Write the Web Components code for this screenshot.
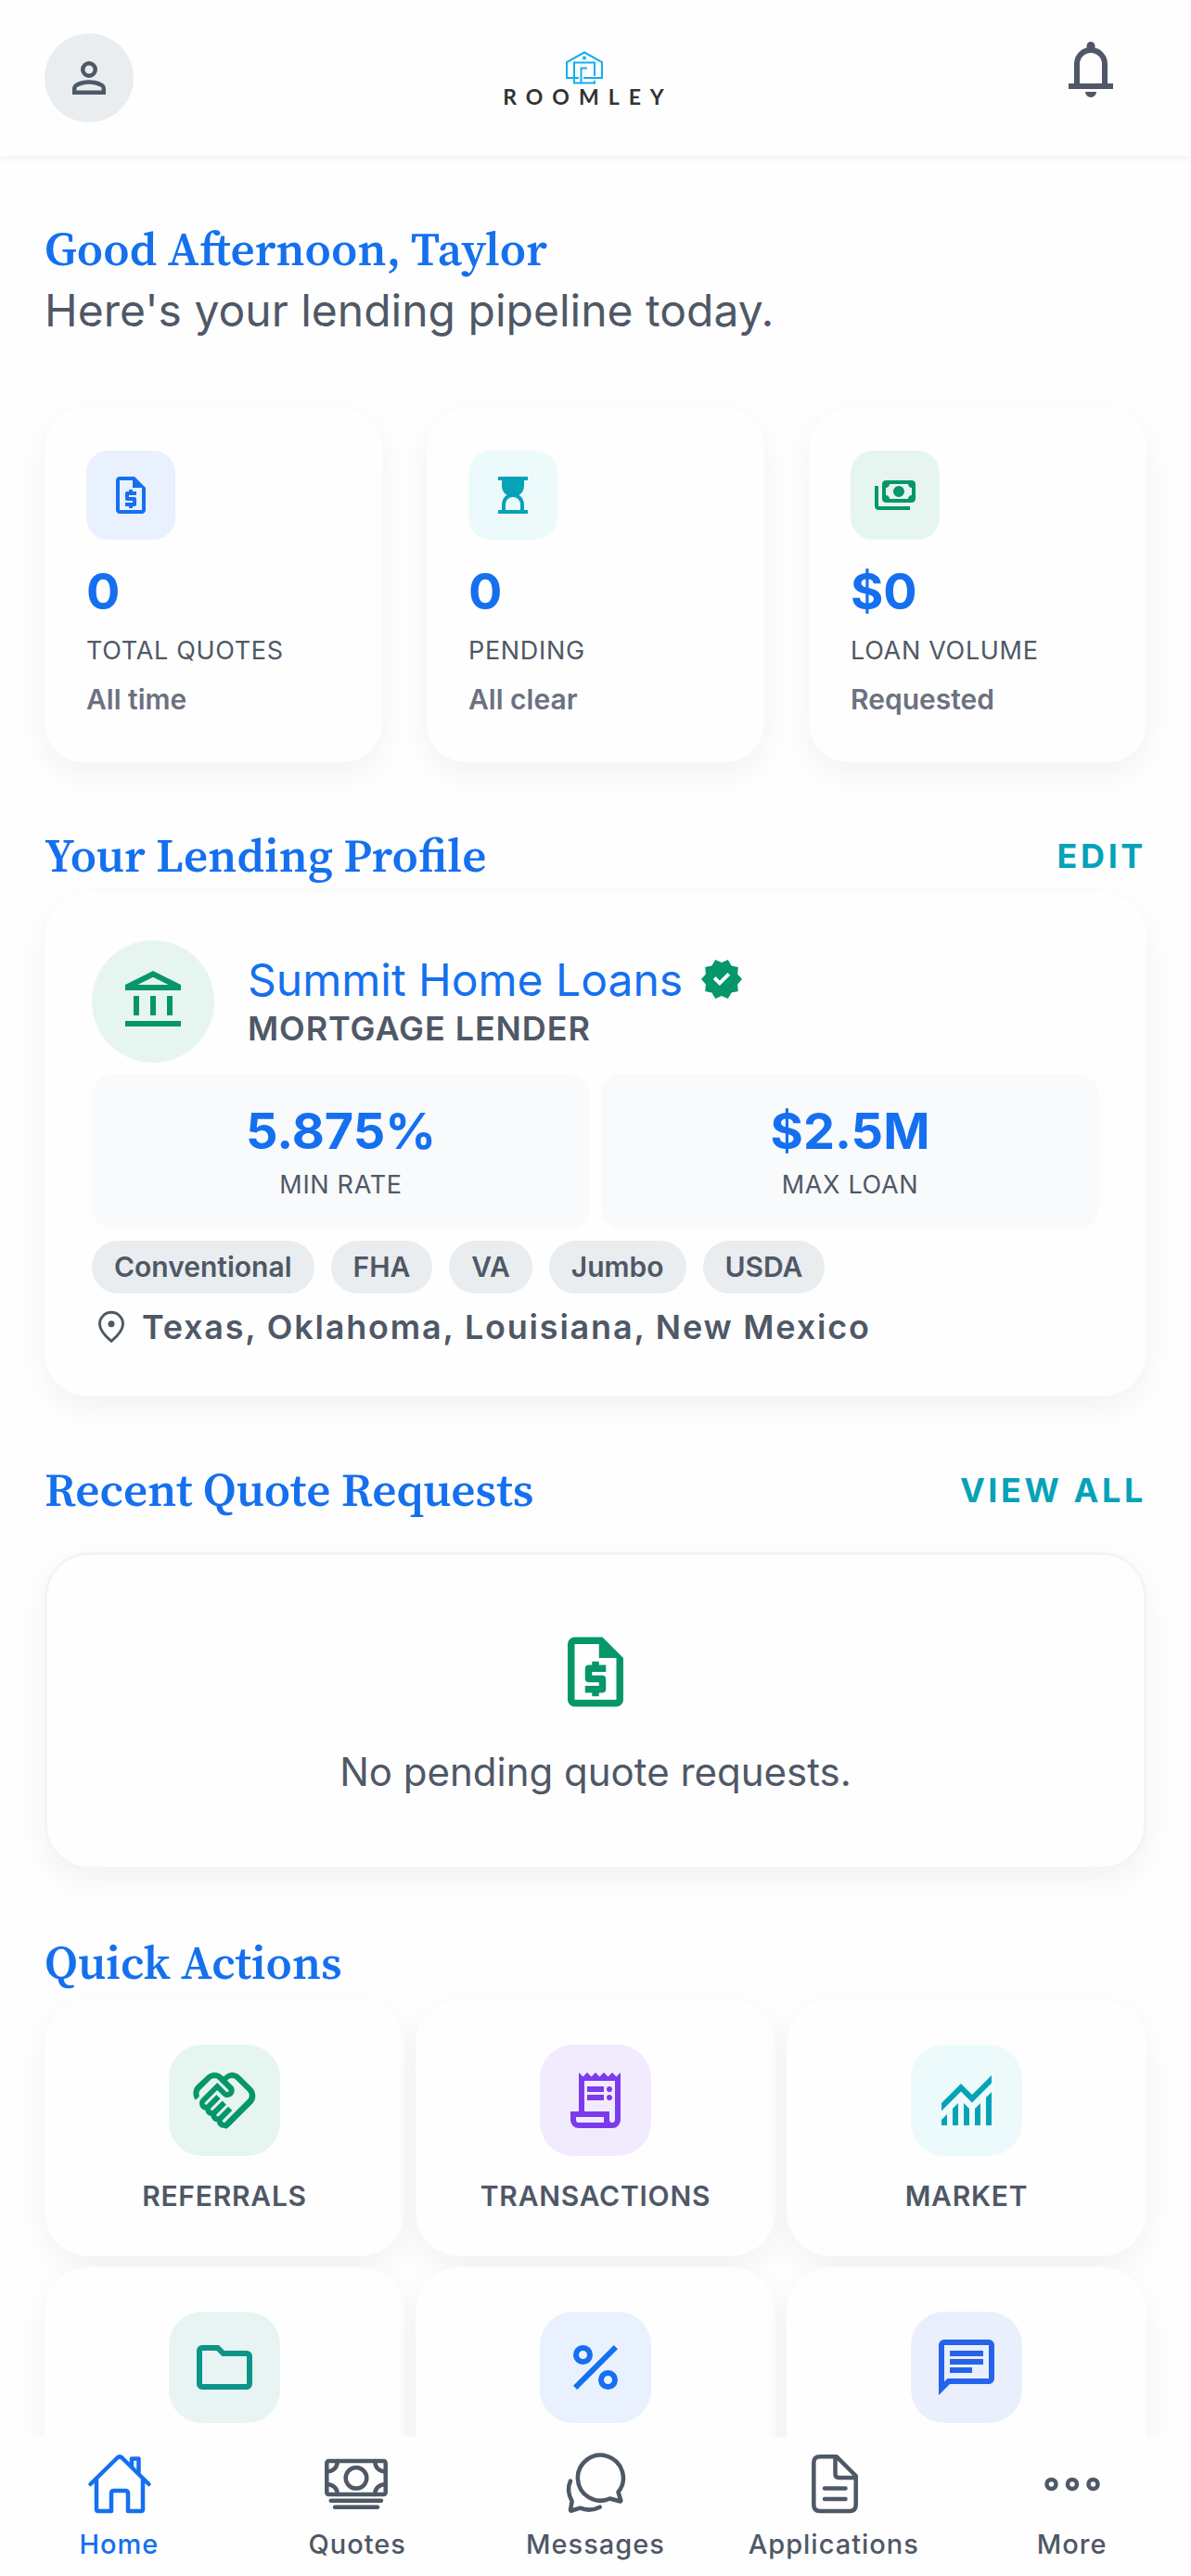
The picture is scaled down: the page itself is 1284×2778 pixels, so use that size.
<!DOCTYPE html>
<html lang="en">
<head>
<meta charset="utf-8">
<meta name="viewport" content="width=device-width, initial-scale=1">
<title>Roomley</title>
<style>
    :root{
        --blue: #1570ef;
        --cyan: #06a2b8;
        --green: #059669;
        --teal: #0d9488;
        --violet: #7c3aed;
        --indigo: #2563eb;
        --ink: #4f5866;
        --muted: #6b7280;
        --chip: #e9edf0;
        --surface: #fefefe;
        --shadow: 0 12px 36px rgba(15,23,42,.05);
        --serif: "Source Serif 4", "Source Serif Pro", "Liberation Serif", serif;
    }
    html,body{height: 100%;}
    body{margin: 0;background: var(--surface);color: var(--ink);font-family: Inter, "Liberation Sans", sans-serif;font-size: 30px;}
</style>
</head>
<body>

<roomley-app>
    <roomley-header slot="header"></roomley-header>

    <roomley-greeting>
        <span slot="title">Good Afternoon, Taylor</span>
        Here's your lending pipeline today.
    </roomley-greeting>

    <stat-row>
        <stat-card icon="quote" tone="blue" value="0" label="TOTAL QUOTES">All time</stat-card>
        <stat-card icon="hourglass" tone="cyan" value="0" label="PENDING">All clear</stat-card>
        <stat-card icon="payments" tone="green" value="$0" label="LOAN VOLUME">Requested</stat-card>
    </stat-row>

    <page-section heading="Your Lending Profile" action="EDIT">
        <lender-card name="Summit Home Loans" role-name="MORTGAGE LENDER">
            <rate-box slot="rates" value="5.875%">MIN RATE</rate-box>
            <rate-box slot="rates" value="$2.5M">MAX LOAN</rate-box>
            <loan-chip slot="chips">Conventional</loan-chip>
            <loan-chip slot="chips">FHA</loan-chip>
            <loan-chip slot="chips">VA</loan-chip>
            <loan-chip slot="chips">Jumbo</loan-chip>
            <loan-chip slot="chips">USDA</loan-chip>
            <span slot="states">Texas, Oklahoma, Louisiana, New Mexico</span>
        </lender-card>
    </page-section>

    <page-section heading="Recent Quote Requests" action="VIEW ALL" spaced>
        <empty-card icon="quote">No pending quote requests.</empty-card>
    </page-section>

    <page-section heading="Quick Actions">
        <action-grid>
            <quick-action icon="handshake" tone="green">REFERRALS</quick-action>
            <quick-action icon="receipt" tone="violet">TRANSACTIONS</quick-action>
            <quick-action icon="market" tone="cyan">MARKET</quick-action>
            <quick-action icon="folder" tone="teal"></quick-action>
            <quick-action icon="percent" tone="blue"></quick-action>
            <quick-action icon="chat" tone="indigo"></quick-action>
        </action-grid>
    </page-section>

    <tab-bar slot="tabs">
        <tab-item icon="home" active>Home</tab-item>
        <tab-item icon="cash">Quotes</tab-item>
        <tab-item icon="bubbles">Messages</tab-item>
        <tab-item icon="file">Applications</tab-item>
        <tab-item icon="more">More</tab-item>
    </tab-bar>
</roomley-app>

<script>
// filled icons, 24 unit grid
const ICONS = {
    person: 'M12 12q-1.65 0-2.825-1.175T8 8t1.175-2.825T12 4t2.825 1.175T16 8t-1.175 2.825T12 12m-8 8v-2.8q0-.85.438-1.562T5.6 14.55q1.55-.775 3.15-1.162T12 13t3.25.388t3.15 1.162q.725.375 1.163 1.088T20 17.2V20zm2-2h12v-.8q0-.275-.137-.5t-.363-.35q-1.35-.675-2.725-1.012T12 15t-2.775.338T6.5 16.35q-.225.125-.363.35T6 17.2zm6-8q.825 0 1.413-.587T14 8t-.587-1.412T12 6t-1.412.588T10 8t.588 1.413T12 10',
    bell: 'M4 19v-2h2v-7q0-2.075 1.25-3.687T10.5 4.2v-.7q0-.625.438-1.062T12 2t1.063.438T13.5 3.5v.7q2 .5 3.25 2.113T18 10v7h2v2zm8 3q-.825 0-1.412-.587T10 20h4q0 .825-.587 1.413T12 22m-4-5h8v-7q0-1.65-1.175-2.825T12 6T9.175 7.175T8 10z',
    quote: 'M11 19h2v-1h1q.425 0 .713-.288T15 17v-3q0-.425-.288-.712T14 13h-3v-1h4v-2h-2V9h-2v1h-1q-.425 0-.712.288T9 11v3q0 .425.288.713T10 15h3v1H9v2h2zm-5 3q-.825 0-1.412-.587T4 20V4q0-.825.588-1.412T6 2h8l6 6v12q0 .825-.587 1.413T18 22zm7-14V4H6v16h12V8z',
    hourglass: 'M8 20h8v-3q0-1.65-1.175-2.825T12 13t-2.825 1.175T8 17zm-4 2v-2h2v-3q0-1.525.713-2.863T8.7 12q-1.275-.8-1.987-2.137T6 7V4H4V2h16v2h-2v3q0 1.525-.712 2.863T15.3 12q1.275.8 1.988 2.138T18 17v3h2v2z',
    payments: 'M14 13q-1.25 0-2.125-.875T11 10t.875-2.125T14 7t2.125.875T17 10t-.875 2.125T14 13m-7 3q-.825 0-1.412-.587T5 14V6q0-.825.588-1.412T7 4h14q.825 0 1.413.588T23 6v8q0 .825-.587 1.413T21 16zm2-2h10q0-.825.588-1.412T21 12V8q-.825 0-1.412-.587T19 6H9q0 .825-.587 1.413T7 8v4q.825 0 1.413.588T9 14m11 6H3q-.825 0-1.412-.587T1 18V7h2v11h17z',
    bank: 'M5 17v-7h2v7zm6 0v-7h2v7zm-9 4v-2h20v2zm15-4v-7h2v7zM2 8V6l10-5l10 5v2zm4.475-2h11.05L12 3.25z',
    verified: 'm8.6 22.5l-1.9-3.2l-3.6-.8l.35-3.7L1 12l2.45-2.8l-.35-3.7l3.6-.8l1.9-3.2L12 2.95l3.4-1.45l1.9 3.2l3.6.8l-.35 3.7L23 12l-2.45 2.8l.35 3.7l-3.6.8l-1.9 3.2l-3.4-1.45zm2.35-6.95L16.6 9.9l-1.4-1.45l-4.25 4.25l-2.15-2.15L7.4 12z',
    handshake: 'M11.875 20q.075 0 .15-.037t.125-.088l8.2-8.2q.3-.3.438-.675t.137-.75q0-.4-.137-.763t-.438-.637l-4.25-4.25q-.275-.3-.638-.437T14.7 4.025q-.375 0-.75.138t-.675.437l-.275.275l1.85 1.875q.375.35.55.8t.175.95q0 1.05-.712 1.763T13.1 10.975q-.5 0-.963-.175t-.812-.525L9.4 8.35l-4.375 4.375q-.075.075-.112.163t-.038.187q0 .2.15.363t.35.162q.1 0 .188-.05t.162-.125l3.4-3.4l1.4 1.4l-3.375 3.4q-.075.075-.112.163T7 15.175q0 .2.15.35t.35.15q.1 0 .188-.037t.162-.113l3.4-3.375l1.4 1.4l-3.375 3.4q-.075.05-.112.15t-.038.2q0 .2.15.35t.35.15q.1 0 .187-.037t.163-.113l3.4-3.375l1.4 1.4l-3.4 3.4q-.075.075-.113.163t-.037.187q0 .2.162.35t.363.15m-.025 2q-.925 0-1.637-.612t-.838-1.538q-.85-.125-1.425-.7t-.7-1.425q-.85-.125-1.412-.712T5.15 15.6q-.95-.125-1.55-.825T3 13.125q0-.5.188-.963t.537-.812l5.675-5.65L12.625 8.9q.05.075.15.113t.2.037q.225 0 .375-.137t.15-.363q0-.1-.037-.2t-.113-.15L9.775 4.625q-.275-.3-.638-.437t-.762-.138q-.375 0-.75.138t-.675.437l-3.525 3.55q-.225.225-.375.525t-.2.6t0 .613t.2.587l-1.45 1.45q-.425-.575-.625-1.263T.8 9.3t.25-1.363t.725-1.187L5.5 3.225q.6-.6 1.363-.9T8.45 2.025t1.588.3t1.362.9l.275.275l.275-.275q.6-.6 1.363-.9T14.7 2t1.588.325t1.362.9L21.875 7.45q.6.6.913 1.375t.312 1.6t-.312 1.575t-.913 1.35l-8.2 8.175q-.35.35-.825.538T11.85 22',
    receipt: 'M6 22q-1.25 0-2.125-.875T3 19v-3h3V2l1.5 1.5L9 2l1.5 1.5L12 2l1.5 1.5L15 2l1.5 1.5L18 2l1.5 1.5L21 2v17q0 1.25-.875 2.125T18 22zm12-2q.425 0 .713-.288T19 19V5H8v11h9v3q0 .425.288.713T18 20M9 9V7h6v2zm0 3v-2h6v2zm8-3q-.425 0-.712-.288T16 8t.288-.712T17 7t.713.288T18 8t-.288.713T17 9m0 3q-.425 0-.712-.288T16 11t.288-.712T17 10t.713.288T18 11t-.288.713T17 12M6 20h9v-2H5v1q0 .425.288.713T6 20',
    market: 'M3 21v-2l2-2v4zm4 0v-6l2-2v8zm4 0v-8l2 2.025V21zm4 0v-5.975l2-2V21zm4 0V11l2-2v12zM3 15.825V13l7-7l4 4l7-7v2.825l-7 7l-4-4z',
    folder: 'M4 20q-.825 0-1.412-.587T2 18V6q0-.825.588-1.412T4 4h6l2 2h8q.825 0 1.413.588T22 8v10q0 .825-.587 1.413T20 20zm0-2h16V8h-8.825l-2-2H4z',
    percent: 'M7.5 11q-1.45 0-2.475-1.025T4 7.5t1.025-2.475T7.5 4t2.475 1.025T11 7.5T9.975 9.975T7.5 11m0-2q.625 0 1.063-.437T9 7.5t-.437-1.062T7.5 6t-1.062.438T6 7.5t.438 1.063T7.5 9m9 11q-1.45 0-2.475-1.025T13 16.5t1.025-2.475T16.5 13t2.475 1.025T20 16.5t-1.025 2.475T16.5 20m0-2q.625 0 1.063-.437T18 16.5t-.437-1.062T16.5 15t-1.062.438T15 16.5t.438 1.063T16.5 18M5.4 20L4 18.6L18.6 4L20 5.4z',
    chat: 'M6 14h8v-2H6zm0-3h12V9H6zm0-3h12V6H6zM2 22V4q0-.825.588-1.412T4 2h16q.825 0 1.413.588T22 4v12q0 .825-.587 1.413T20 18H6zm3.15-6H20V4H4v13.125z'
};

// outlined icons, 72 unit grid
const LINES = {
    pin: '<g stroke-width="5"><path d="M36 62.500C46 54 57.500 43 57.500 30.500A21.500 21.500 0 0 0 14.500 30.500C14.500 43 26 54 36 62.500Z"/><circle cx="36" cy="30.500" r="6" fill="currentColor" stroke="none"/></g>',
    home: '<path d="M5.500 36 34.500 7.500Q37 5.200 39.500 7.500L68.500 36M12 30.500V63Q12 65 14 65H28V46Q28 43 31 43H43Q46 43 46 46V65H60Q62 65 62 63V30.500M50 17V8.500H57.500V24"/>',
    cash: '<rect x="3.300" y="11" width="63.400" height="36" rx="2"/><circle cx="35" cy="29.300" r="11.300"/><path d="M3.300 22.500Q14.500 21.500 14.800 11M66.700 22.500Q55.500 21.500 55.200 11M3.300 36Q14.500 37 14.800 47M66.700 36Q55.500 37 55.200 47M7.700 53.700H62M12 60.700H58"/>',
    bubbles: '<path d="M60.500 44.500A24.500 24.500 0 1 0 51.500 51.500L62.500 54.500Q63.500 54.700 63.300 53.500Z"/><path d="M9 32.500C5.500 40 6.500 47 10.700 54.500L9 63.500Q8.800 65 10.300 64.500L19.500 61.700Q30 66 40.700 60.700"/>',
    file: '<path d="M39 6.300H21Q14.300 6.300 14.300 13V58.300Q14.300 65 21 65H53Q59.700 65 59.700 58.300V27ZM37.500 7V25Q37.500 29 41.500 29H59M26 40.500H48.500M26 52H48.500"/>',
    more: '<circle cx="13.500" cy="36" r="5"/><circle cx="36" cy="36" r="5"/><circle cx="58.500" cy="36" r="5"/>'
};

class AppIcon extends HTMLElement {
    constructor() {
        super();
        this.attachShadow({ mode: 'open' });
    }
    connectedCallback() {
        const name = this.getAttribute('name');
        const svg = ICONS[name]
            ? `<svg viewBox="0 0 24 24" fill="currentColor" aria-hidden="true"><path d="${ICONS[name]}"/></svg>`
            : `<svg viewBox="0 0 72 72" fill="none" stroke="currentColor" stroke-width="4.500" stroke-linecap="round" stroke-linejoin="round" aria-hidden="true">${LINES[name]}</svg>`;
        this.shadowRoot.innerHTML = `
            <style>
                :host{display: block;flex: none;width: 72px;height: 72px;}
                svg{display: block;width: 100%;height: 100%;}
            </style>
            ${svg}
        `;
    }
}
customElements.define('app-icon', AppIcon);

// base class: every element below only gives its markup
class BaseElement extends HTMLElement {
    constructor() {
        super();
        this.attachShadow({ mode: 'open' });
    }
    attr(name) {
        return this.getAttribute(name) || '';
    }
    connectedCallback() {
        this.shadowRoot.innerHTML = this.render();
    }
}

class RoomleyApp extends BaseElement {
    render() {
        return `
            <style>
                :host{display: flex;flex-direction: column;height: 100vh;}
                main{flex: 1;min-height: 0;overflow-y: auto;scrollbar-width: none;padding: 72px 48px 48px;}
            </style>
            <slot name="header"></slot>
            <main><slot></slot></main>
            <slot name="tabs"></slot>
        `;
    }
}
customElements.define('roomley-app', RoomleyApp);

class RoomleyHeader extends BaseElement {
    render() {
        return `
            <style>
                :host{display: block;position: relative;z-index: 1;background: var(--surface);box-shadow: 0 3px 9px rgba(15,23,42,.05);}
                header{display: flex;align-items: center;justify-content: space-between;padding: 36px 48px;}
                button{display: flex;align-items: center;justify-content: center;height: 96px;padding: 0;border: 0;background: none;color: inherit;}
                .avatar{width: 96px;border-radius: 50%;background: var(--chip);}
                .avatar app-icon{width: 54px;height: 54px;}
                .bell{width: 120px;padding-bottom: 18px;}
                .logo{display: flex;flex-direction: column;align-items: center;color: #333;text-decoration: none;}
                .logo svg{display: block;width: 42px;height: 40px;}
                .logo span{padding-left: 8px;font: 700 23px/22px Lato, sans-serif;letter-spacing: 10px;}
            </style>
            <header>
                <button class="avatar" aria-label="Account"><app-icon name="person"></app-icon></button>
                <a class="logo" href="#">
                    <svg viewBox="0 -2 42 40" fill="none" stroke="#12aef0" stroke-width="2" aria-hidden="true">
                        <path d="M15 29H2V12L21 1.500 40 12V29H20M32 27V12.500H10V34.500H32V32M17.500 34.500V18.500H24"/>
                        <path d="M19.200 7.500h3.500" stroke-width="3.500"/>
                    </svg>
                    <span>ROOMLEY</span>
                </a>
                <button class="bell" aria-label="Notifications"><app-icon name="bell"></app-icon></button>
            </header>
        `;
    }
}
customElements.define('roomley-header', RoomleyHeader);

class RoomleyGreeting extends BaseElement {
    render() {
        return `
            <style>
                :host{display: block;}
                h1{margin: 0;font: 600 51px/57px var(--serif);color: var(--blue);}
                p{margin: 0;font-size: 48px;line-height: 75px;}
            </style>
            <h1><slot name="title"></slot></h1>
            <p><slot></slot></p>
        `;
    }
}
customElements.define('roomley-greeting', RoomleyGreeting);

class StatRow extends BaseElement {
    render() {
        return `
            <style>
                :host{display: grid;grid-template-columns: repeat(3, 1fr);gap: 48px;margin-top: 69px;}
            </style>
            <slot></slot>
        `;
    }
}
customElements.define('stat-row', StatRow);

class IconTile extends BaseElement {
    render() {
        return `
            <style>
                :host{display: flex;flex: none;align-items: center;justify-content: center;width: 96px;height: 96px;border-radius: 24px;color: var(--${this.attr('tone')});background: color-mix(in srgb, currentColor 10%, white);}
                :host([tone="cyan"]){background: #edfafc;}
                :host([size="large"]){width: 120px;height: 120px;border-radius: 36px;}
                :host([size="round"]){width: 132px;height: 132px;border-radius: 50%;}
                app-icon{width: 48px;height: 48px;}
                :host([size]) app-icon{width: 72px;height: 72px;}
            </style>
            <app-icon name="${this.attr('icon')}"></app-icon>
        `;
    }
}
customElements.define('icon-tile', IconTile);

class StatCard extends BaseElement {
    render() {
        return `
            <style>
                :host{display: block;padding: 45px;border-radius: 42px;background: var(--surface);box-shadow: var(--shadow);}
                p{margin: 0;}
                .value{margin-top: 24px;font-size: 54px;line-height: 63px;font-weight: 700;color: var(--blue);}
                .label{margin-top: 15px;font-size: 27px;line-height: 36px;letter-spacing: .025em;white-space: nowrap;}
                .note{margin-top: 12px;font-size: 30px;line-height: 45px;font-weight: 600;color: var(--muted);}
            </style>
            <icon-tile icon="${this.attr('icon')}" tone="${this.attr('tone')}"></icon-tile>
            <p class="value">${this.attr('value')}</p>
            <p class="label">${this.attr('label')}</p>
            <p class="note"><slot></slot></p>
        `;
    }
}
customElements.define('stat-card', StatCard);

class PageSection extends BaseElement {
    render() {
        const action = this.attr('action');
        return `
            <style>
                :host{display: block;margin-top: 72px;}
                .head{display: flex;align-items: center;justify-content: space-between;margin-bottom: 12px;}
                :host([spaced]) .head{margin-bottom: 39px;}
                h2{margin: 0;font: 600 51px/57px var(--serif);color: var(--blue);}
                a{font-size: 36px;line-height: 48px;font-weight: 700;letter-spacing: .1em;color: var(--cyan);text-decoration: none;}
            </style>
            <div class="head">
                <h2>${this.attr('heading')}</h2>
                ${action ? `<a href="#">${action}</a>` : ''}
            </div>
            <slot></slot>
        `;
    }
}
customElements.define('page-section', PageSection);

class LenderCard extends BaseElement {
    render() {
        return `
            <style>
                :host{display: flex;flex-direction: column;gap: 12px;padding: 51px;border-radius: 48px;background: var(--surface);box-shadow: var(--shadow);}
                .top{display: flex;align-items: center;gap: 36px;}
                h3{display: flex;align-items: center;gap: 18px;margin: 0;font-size: 48px;line-height: 57px;font-weight: 400;color: var(--blue);}
                h3 app-icon{width: 48px;height: 48px;color: var(--green);}
                p{margin: 0;font-size: 36px;line-height: 48px;font-weight: 600;letter-spacing: .025em;}
                .rates{display: grid;grid-template-columns: 1fr 1fr;gap: 12px;}
                .chips{display: flex;flex-wrap: wrap;gap: 18px;}
                .states{display: flex;align-items: center;gap: 12px;letter-spacing: .05em;}
                .states app-icon{width: 42px;height: 42px;}
            </style>
            <div class="top">
                <icon-tile icon="bank" tone="green" size="round"></icon-tile>
                <div>
                    <h3>${this.attr('name')}<app-icon name="verified"></app-icon></h3>
                    <p>${this.attr('role-name')}</p>
                </div>
            </div>
            <div class="rates"><slot name="rates"></slot></div>
            <div class="chips"><slot name="chips"></slot></div>
            <p class="states"><app-icon name="pin"></app-icon><slot name="states"></slot></p>
        `;
    }
}
customElements.define('lender-card', LenderCard);

class RateBox extends BaseElement {
    render() {
        return `
            <style>
                :host{display: block;padding: 27px 24px 24px;border-radius: 24px;background: #f8fafc;text-align: center;}
                p{margin: 0;}
                .value{font-size: 54px;line-height: 69px;font-weight: 700;color: var(--blue);}
                .label{font-size: 27px;line-height: 48px;letter-spacing: .025em;}
            </style>
            <p class="value">${this.attr('value')}</p>
            <p class="label"><slot></slot></p>
        `;
    }
}
customElements.define('rate-box', RateBox);

class LoanChip extends BaseElement {
    render() {
        return `
            <style>
                :host{display: block;padding: 0 24px;border-radius: 30px;background: var(--chip);font-size: 30px;line-height: 57px;font-weight: 600;}
            </style>
            <slot></slot>
        `;
    }
}
customElements.define('loan-chip', LoanChip);

class EmptyCard extends BaseElement {
    render() {
        return `
            <style>
                :host{display: flex;flex-direction: column;align-items: center;gap: 36px;padding: 81px 48px 75px;border: 3px solid #f1f5f9;border-radius: 48px;background: var(--surface);box-shadow: var(--shadow);}
                app-icon{width: 90px;height: 90px;color: var(--green);}
                p{margin: 0;font-size: 42px;line-height: 54px;}
            </style>
            <app-icon name="${this.attr('icon')}"></app-icon>
            <p><slot></slot></p>
        `;
    }
}
customElements.define('empty-card', EmptyCard);

class ActionGrid extends BaseElement {
    render() {
        return `
            <style>
                :host{display: grid;grid-template-columns: repeat(3, 1fr);gap: 12px;}
            </style>
            <slot></slot>
        `;
    }
}
customElements.define('action-grid', ActionGrid);

class QuickAction extends BaseElement {
    render() {
        return `
            <style>
                :host{display: block;}
                button{display: flex;flex-direction: column;align-items: center;gap: 24px;width: 100%;padding: 48px 24px 45px;border: 0;border-radius: 48px;background: var(--surface);box-shadow: var(--shadow);color: inherit;font: 600 30px/39px Inter, sans-serif;letter-spacing: .025em;}
                span{min-height: 39px;}
            </style>
            <button aria-label="${this.textContent || this.attr('icon')}">
                <icon-tile icon="${this.attr('icon')}" tone="${this.attr('tone')}" size="large"></icon-tile>
                <span><slot></slot></span>
            </button>
        `;
    }
}
customElements.define('quick-action', QuickAction);

class TabBar extends BaseElement {
    render() {
        return `
            <style>
                :host{display: block;position: relative;background: var(--surface);}
                nav{display: grid;grid-template-columns: repeat(5, 1fr);}
            </style>
            <nav><slot></slot></nav>
        `;
    }
}
customElements.define('tab-bar', TabBar);

class TabItem extends BaseElement {
    render() {
        return `
            <style>
                :host{display: block;}
                a{display: flex;flex-direction: column;align-items: center;gap: 9px;padding: 15px 0;color: inherit;font-size: 29px;line-height: 39px;font-weight: 500;letter-spacing: 1px;text-decoration: none;}
                :host([active]) a{color: var(--blue);}
            </style>
            <a href="#"><app-icon name="${this.attr('icon')}"></app-icon><span><slot></slot></span></a>
        `;
    }
}
customElements.define('tab-item', TabItem);
</script>
</body>
</html>
